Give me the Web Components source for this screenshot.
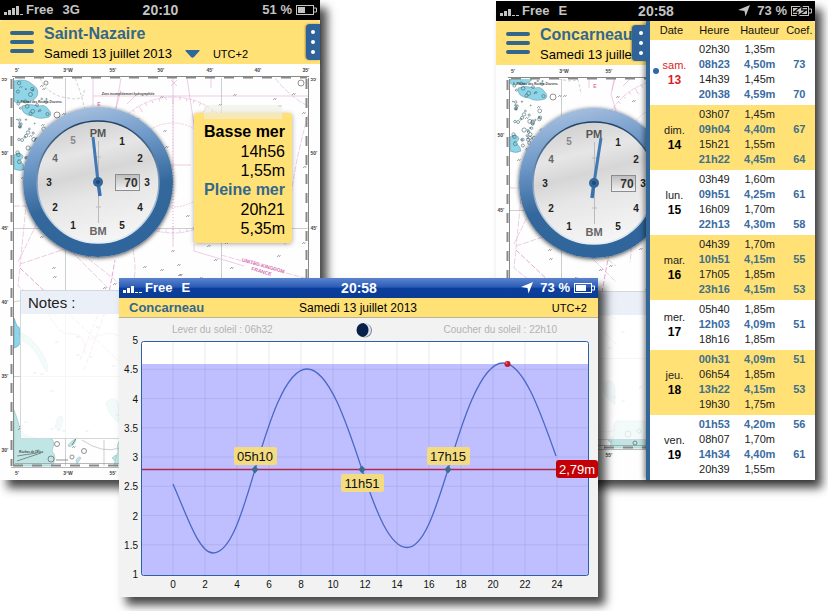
<!DOCTYPE html>
<html lang="fr">
<head>
<meta charset="utf-8">
<title>Marées</title>
<style>
  :root { --sun: #ffe176; --blue: #336699; --title: #33678c; }
  body { margin: 0; background: #fff; font-family: "Liberation Sans", Arial, sans-serif; color: #000; }
</style>
</head>
<body>
<tide-desktop>
  <app-window slot="first">
    <status-bar carrier="Free" network="3G" time="20:10" battery="51 %" level="50"></status-bar>
    <port-header port="Saint-Nazaire" date="Samedi 13 juillet 2013" zone="UTC+2" menu></port-header>
    <port-view needle="93,137 100,196" note></port-view>
  </app-window>
  <app-window slot="second">
    <status-bar carrier="Free" network="E" time="20:58" battery="73 %" gps charging level="100"></status-bar>
    <drawer-layout>
      <port-header slot="main" port="Concarneau" date="Samedi 13 juillet 2013"></port-header>
      <port-view slot="main" needle="105,137 96,197" shift="-19"></port-view>
      <tide-table slot="drawer"></tide-table>
    </drawer-layout>
  </app-window>
  <app-window slot="third">
    <status-bar tone="blue" carrier="Free" network="E" time="20:58" battery="73 %" gps level="73"></status-bar>
    <chart-header port="Concarneau" date="Samedi 13 juillet 2013" zone="UTC+2"></chart-header>
    <tide-chart></tide-chart>
  </app-window>
</tide-desktop>

<script>
function define(name, render) {
  customElements.define(name, class extends HTMLElement {
    constructor() { super(); this.attachShadow({ mode: 'open' }); }
    connectedCallback() { this.shadowRoot.innerHTML = render(this); }
  });
}
const attr = (el, n) => el.getAttribute(n) || '';

/* Overlapping windows share the cells of one proportional grid. */
define('tide-desktop', () => `
<style>
  :host { display: grid; min-height: 100vh; overflow: hidden;
    grid-template-columns: minmax(0,119fr) minmax(0,201fr) minmax(0,176fr) minmax(0,102fr) minmax(0,217fr) minmax(0,13fr);
    grid-template-rows: 278fr 202fr 117fr 14fr; }
  ::slotted([slot=first]) { grid-area: 1 / 1 / 3 / 3; }
  ::slotted([slot=second]) { grid-area: 1 / 4 / 3 / 6; margin-top: 1px; }
  ::slotted([slot=third]) { grid-area: 2 / 2 / 4 / 5; }
</style>
<slot name="first"></slot><slot name="second"></slot><slot name="third"></slot>`);

define('app-window', () => `
<style>
  :host { display: flex; flex-direction: column; min-height: 0; position: relative; background: #fff;
    box-shadow: 7px 8px 9px rgba(0,0,0,.72); }
</style><slot></slot>`);

define('status-bar', el => {
  const blue = attr(el, 'tone') === 'blue';
  const full = attr(el, 'network') === '3G';
  return `
<style>
  :host { display: grid; grid-template-columns: 1fr auto 1fr; align-items: center; height: 20px; padding: 0 3px 0 4px;
    box-sizing: border-box; font-size: 13px; line-height: 20px; font-weight: bold; white-space: nowrap;
    color: ${blue ? '#fff' : '#c4c4c4'}; background: ${blue ? 'linear-gradient(#5b84cf, #2b5cb5 45%, #0b3f9e 52%, #0c3c93)' : '#000'}; }
  div { display: flex; align-items: center; gap: 3px; }
  .net { margin-left: 6px; }
  .right { justify-content: flex-end; gap: 4px; }
  time { font-size: 14px; }
  svg { display: block; }
  .gps { margin-right: 3px; }
</style>
<div><svg width="19" height="10" fill="currentColor" aria-hidden="true"><path d="M0 7h3v3H0zM4 5h3v5H4zM8 3h3v7H8z"/><path d="${full ? 'M12 1h3v9h-3zM16 9h3v1h-3z' : 'M12 9h3v1h-3zM16 9h3v1h-3z'}"/></svg>
  <span>${attr(el, 'carrier')}</span><span class="net">${attr(el, 'network')}</span></div>
<time>${attr(el, 'time')}</time>
<div class="right">
  ${el.hasAttribute('gps') ? '<svg class="gps" width="12" height="12" fill="currentColor" aria-hidden="true"><path d="M12 0L7.500 11.500 6.500 6 0 5z"/></svg>' : ''}
  <span>${attr(el, 'battery')}</span>
  <svg width="21" height="11" aria-hidden="true"><rect x=".5" y=".5" width="17" height="9" fill="none" stroke="currentColor"/><path d="M18 3h2.500v4H18" fill="none" stroke="currentColor"/><rect x="2" y="2" width="${Math.round(attr(el, 'level') * .14)}" height="6" fill="currentColor"/>
  ${el.hasAttribute('charging') ? '<path d="M10.500 1L4.500 5.500H8L7 9l6.500-4.500H10z" fill="currentColor" stroke="#000" stroke-width="2.400" paint-order="stroke"/>' : ''}</svg>
</div>`;
});

define('drawer-handle', () => `
<style>
  :host { display: block; width: 14px; height: 36px; }
  button { display: block; width: 100%; height: 100%; padding: 0; border: 0; border-radius: 4px 0 0 4px; background: #2f639a;
    box-shadow: -1px 0 2px rgba(0,0,0,.35); }
  svg { display: block; margin: 0 auto; }
</style>
<button aria-label="Horaires"><svg width="8" height="36" fill="#fff"><circle cx="4" cy="8" r="2"/><circle cx="4" cy="18" r="2"/><circle cx="4" cy="28" r="2"/></svg></button>`);

define('port-header', el => `
<style>
  :host { display: flex; height: 44px; box-sizing: border-box; padding: 4px 0 0 10px; gap: 10px; background: var(--sun);
    border-radius: 3px 3px 0 0; box-shadow: 0 1px 2px rgba(0,0,0,.4); position: relative; white-space: nowrap; overflow: clip; overflow-clip-margin: 3px; }
  button { border: 0; padding: 0; background: none; display: flex; align-items: center; flex: none; }
  .menu { height: 36px; }
  h1 { margin: 0; font-size: 16px; line-height: 20px; color: var(--title); }
  .row { display: flex; align-items: center; font-size: 13px; line-height: 20px; gap: 13px; }
  small { font-size: 11px; }
  drawer-handle { margin-left: auto; }
</style>
<button class="menu" aria-label="Menu"><svg width="24" height="24" stroke="#33668c" stroke-width="4" stroke-linecap="round"><path d="M2 3h20M2 12h20M2 21h20"/></svg></button>
<div><h1>${attr(el, 'port')}</h1>
<div class="row"><span>${attr(el, 'date')}</span>${attr(el, 'zone') ? `<button aria-label="Choisir la date"><svg width="15" height="8" fill="#2f679d"><path d="M1 0h13q1 0 .5 1L9 7q-1.500 1.500-3 0L.5 1Q0 0 1 0z"/></svg></button><small>${attr(el, 'zone')}</small>` : ''}</div></div>
${el.hasAttribute('menu') ? '<drawer-handle></drawer-handle>' : ''}`);

/* Nautical chart. The sea content scrolls by "shift" under a fixed top border. */
define('sea-map', el => {
  const dy = +attr(el, 'shift') || 0;
  let seed = 7;
  const rnd = () => (seed = (seed * 16807) % 2147483647) / 2147483647;
  const top = 78;
  let marks = '', islets = '', ticks = '';
  for (let i = 0; i < 150; i++) {
    const x = (18 + rnd() * 286).toFixed(0), y = (86 + rnd() * 374).toFixed(0);
    marks += `M${x} ${y}l2 -2m0 2l1.500 -2`;
  }
  for (let i = 0; i < 75; i++) {
    const x = (17 + rnd() * 38 * (.4 + rnd() * .6)).toFixed(1), y = (83 + rnd() * 92).toFixed(1);
    islets += `<circle cx="${x}" cy="${y}" r="${(.5 + rnd() * 1.600).toFixed(1)}"/>`;
  }
  for (let a = 0; a < 360; a += 6) ticks += `<path transform="rotate(${a} 173 165)" d="M173 97v${a % 30 ? 3 : 7}"/>`;
  const xs = [[17, '5’'], [68, '3°W'], [113, '55’'], [161, '50’'], [210, '45’'], [258, '40’'], [306, '35’']];
  const ys = [[79, '55’'], [153, '50’'], [228, '45’'], [302, '40’'], [376, '35’'], [450, '30’']];
  return `
<style>
  :host { display: block; overflow: hidden; }
  svg { display: block; width: 100%; height: 100%; min-width: 320px; }
  text { font: bold 5px "Liberation Sans", Arial, sans-serif; text-anchor: middle; fill: #444; }
  .tiny { font-size: 3px; font-style: italic; }
  .pink { fill: #d873b4; }
</style>
<svg viewBox="0 64 320 416" preserveAspectRatio="xMinYMin slice" aria-hidden="true">
<defs><clipPath id="sea"><rect x="0" y="${top}" width="320" height="420"/></clipPath></defs>
<rect y="64" width="320" height="416" fill="#fefefe"/>
<g clip-path="url(#sea)"><g transform="translate(0 ${dy})">
  <g fill="#8fd5e8" stroke="#5b93a5" stroke-width=".5">
    <path d="M14 81q12-3 18 3 8 5 5 12-4 7-12 5-8 4-11 0z"/><path d="M22 106q8-3 17 0 6-2 9 3 5 5 1 8-10 3-16-1-12-1-11-10z"/>
    <path d="M14 155q6-4 9 1-1 5-5 4 6 3 7 9-5 3-11 0z"/><path d="M14 318l3 8q4 1 3 8 3 12-6 14z"/>
  </g>
  <g fill="#bfe6e4" stroke="#8bbdbd" stroke-width=".5">
    <path d="M14 410q5 12 6 20 8 10 24 8 14-2 8 13 6 6 0 15H14z"/><path d="M20 332q12 5 20 18 10 14 7 22-4-5-8-14-6-13-19-18z"/>
    <path d="M55 428q2-14 7-12 2 8-3 14zM68 445q5-5 8-7 0 7-7 9zM76 460q3-5 5-2l-4 6zM106 402q10-8 13 3v18q-12-9-13-21zM112 458q6-6 8 0v8z"/>
    <path d="M120 439h30v27h-36q1-8 4-14-2-7 2-13z"/>
  </g>
  <g fill="none" stroke="#b6babf" stroke-width=".7"><path d="M65.500 78v388M221.500 78v388M13 228.500h295M13 376.500h295M14 302q22-8 34 10 9 24 25 22 13-1 12 20M90 340q20-12 30-3M82 440q20 14 38 8M104 440v26"/>
    <path d="M40 78q8 18 28 20 18 4 16-10M75 78q8 20 10 34" stroke-dasharray="3 2"/></g>
  <path d="${marks}" fill="none" stroke="#707070" stroke-width=".6"/>
  <g fill="none" stroke="#3f6670" stroke-width=".6">${islets}</g>
  <g fill="none" stroke="#494949" stroke-width=".6"><circle cx="46" cy="83" r="2"/><circle cx="57" cy="115" r="3"/><circle cx="301" cy="83" r="3"/><circle cx="57" cy="444" r="2.500"/><circle cx="84" cy="451" r="2.500"/><circle cx="51" cy="459" r="3"/><circle cx="72" cy="457" r="2"/><circle cx="132" cy="452" r="3"/><circle cx="139" cy="461" r="2"/><circle cx="143" cy="449" r="2"/><path d="M56 460h12M17 461l24-8M17 456l20-3M72 445l5-8"/></g>
  <g fill="none" stroke="#e2acd3" stroke-width=".6">
    <path d="M93 78v18h215M93 96v10M121 78l-5 30M187 78l9 60M211 78v10M173 78v92M125 165h66M173 233v14M194 244v7l50 15"/><path d="M173 100v140" stroke-dasharray="1 2" stroke-width="2" stroke="#eed3e7"/>
    <circle cx="173" cy="165" r="68" stroke-dasharray="4 1"/><circle cx="173" cy="165" r="42" stroke-dasharray="2 1"/>${ticks}
    <path d="M18 262l22-45q20-10 60 0M14 206h12l-8 80 40 32M20 264l90-30M40 220l80 80M65 240l55 44M131 242q6 20 3 38M275 78q14 18 33 28M221 255l87 24M308 115q-14 50-18 90l-5 40" stroke-dasharray="6 1.500"/>
    <path d="M20 268l36 34 64 60M84 370l22-60 9-50M80 360l22-56" stroke-width="1" stroke-dasharray="5 2"/>
    <path d="M121 90l-6 22 7 24M127 104l10-10M171 80l6 6m-6 0l6-6"/>
  </g>
  ${dy ? '' : `<text class="tiny" x="128" y="95">Zone incomplètement hydrographiée</text>
  <g transform="rotate(16 265 270)"><text class="pink" x="262" y="268">UNITED KINGDOM</text><text class="pink" x="262" y="274">FRANCE</text></g>
  <text class="tiny" x="31" y="453">Roches de l'Élou</text>`}
  <text class="tiny" x="41" y="103">Plateau des Roches Douvres</text>
  <text class="pink" x="99" y="106">E</text>
  <g stroke="#888" fill="none"><path d="M13.500 60v406M308.500 60v406"/><path d="M11.500 60v406M306.500 60v406M13 465.500h295" stroke-width="2" stroke-dasharray="10 9"/><path d="M11 467.500h299M15 463.500h292" stroke-width=".6"/></g>
  ${ys.filter(p => p[0] + dy > 78).map(([y, t], i) => `${dy && i > 1 ? '' : `<text x="5" y="${y + 2}">${t}</text>`}${dy || i > 2 ? '' : `<text x="314" y="${y + 2}">${t}</text>`}`).join('')}
  ${xs.slice(dy ? 2 : 0, 3).map(([x, t]) => `<text x="${x}" y="475">${t}</text>`).join('')}
</g></g>
<g stroke="#888" fill="none"><path d="M12 76.500h297"/><path d="M15 77.500h292" stroke-width="2" stroke-dasharray="10 9"/></g>
${xs.slice(0, dy ? 3 : 7).map(([x, t]) => `<text x="${x}" y="72">${t}</text>`).join('')}
</svg>`;
});

define('tide-clock', el => {
  const [tip, tail] = attr(el, 'needle').split(' ');
  const nums = [[122, 141, 1], [140, 158, 2], [147, 182, 3], [140, 207, 4], [122, 225, 5], [73, 225, 1], [55, 207, 2], [49, 182, 3], [55, 158, 4, '#666'], [73, 140, 5, '#888']];
  return `
<style>
  :host { display: block; flex: none; width: 150px; height: 150px; border-radius: 50%; box-shadow: 0 1px 4px rgba(0,0,0,.75); }
  svg { display: block; width: 100%; height: 100%; }
  text { font: bold 10px "Liberation Sans", Arial, sans-serif; text-anchor: middle; fill: #222; }
</style>
<svg viewBox="23 107 150 150" role="img" aria-label="Horloge des marées">
<defs>
 <linearGradient id="ring" x1=".3" y1="0" x2=".55" y2="1"><stop offset="0" stop-color="#a9c1e0"/><stop offset=".3" stop-color="#6f99c8"/><stop offset=".62" stop-color="#34689c"/><stop offset="1" stop-color="#2f659b"/></linearGradient>
 <linearGradient id="lip" x1="0" y1="0" x2="0" y2="1"><stop offset="0" stop-color="#1f3f63"/><stop offset=".5" stop-color="#7e9cba"/><stop offset="1" stop-color="#e8f0f8"/></linearGradient>
 <linearGradient id="face" x1=".35" y1="0" x2=".6" y2="1"><stop offset="0" stop-color="#cfcfcf"/><stop offset=".25" stop-color="#e6e6e6"/><stop offset=".42" stop-color="#d6d6d6"/><stop offset=".6" stop-color="#e6e6e6"/><stop offset="1" stop-color="#f6f6f6"/></linearGradient>
 <linearGradient id="box" x1="0" y1="0" x2="0" y2="1"><stop offset="0" stop-color="#bdbdbd"/><stop offset="1" stop-color="#f3f3f3"/></linearGradient>
</defs>
<circle cx="98" cy="182" r="75" fill="url(#ring)"/><circle cx="98" cy="182" r="61" fill="url(#face)" stroke="url(#lip)" stroke-width="1.500"/>
<path d="M98.500 141v82M96 157h5M96 207h5" stroke="#bbb"/>
<text x="98" y="137" style="font-size:11px;fill:#555">PM</text><text x="98" y="235" style="font-size:11px;fill:#666">BM</text>
${nums.map(([x, y, n, c]) => `<text x="${x}" y="${y + 4}"${c ? ` style="fill:${c}"` : ''}>${n}</text>`).join('')}
<rect x="115.500" y="174.500" width="24" height="16" fill="url(#box)" stroke="#8d8d8d"/><text x="131" y="187" style="font-size:12px;fill:#333">70</text>
<path d="M${tip} L98,182" stroke="#4179b4" stroke-width="3"/><path d="M98,182 L${tail}" stroke="#3a71ab" stroke-width="3.500"/>
<circle cx="98" cy="182" r="5" fill="#336699"/><circle cx="98" cy="182" r="2" fill="#1d4a7a"/>
</svg>`;
});

define('port-view', el => `
<style>
  :host { display: block; position: relative; flex: 1; min-height: 0; overflow: hidden; }
  sea-map { position: absolute; inset: 0; }
  .content { position: relative; padding: 43px 20px 0; }
  .row { display: flex; gap: 21px; padding-left: 3px; align-items: flex-start; }
  .note { position: relative; margin-top: 6px; width: 98px; box-sizing: border-box; padding: 9px 7px 5px 0; background: var(--sun); border-radius: 3px;
    box-shadow: 0 1px 5px rgba(0,0,0,.35); text-align: right; font-size: 16px; line-height: 19px; white-space: nowrap; }
  .note::before { content: ""; position: absolute; left: 10px; right: 10px; top: -8px; height: 14px; background: rgba(240,238,225,.6); }
  h2 { margin: 0; font-size: 16px; line-height: 20px; }
  p { margin: 0; }
  .high { color: var(--title); }
  .notes { margin-top: 33px; min-width: 280px; height: 149px; box-sizing: border-box; display: flex; flex-direction: column; border: 1px solid #d3d8dc; background: rgba(255,255,255,.8); }
  label { display: block; height: 23px; line-height: 23px; padding-left: 7px; font-size: 15px; color: #222; background: rgba(232,236,247,.85); }
  textarea { flex: 1; border: 0; padding: 4px 8px; background: none; resize: none; font: inherit; }
</style>
<sea-map shift="${attr(el, 'shift')}"></sea-map>
<div class="content">
  <div class="row"><tide-clock needle="${attr(el, 'needle')}"></tide-clock>
  ${el.hasAttribute('note') ? '<section class="note"><h2>Basse mer</h2><p>14h56</p><p>1,55m</p><h2 class="high">Pleine mer</h2><p>20h21</p><p>5,35m</p></section>' : ''}</div>
  <div class="notes"><label for="n">${el.hasAttribute('note') ? 'Notes :' : ''}</label><textarea id="n" aria-label="Notes"></textarea></div>
</div>`);

define('drawer-layout', () => `
<style>
  :host { display: flex; flex: 1; min-height: 0; }
  main { flex: 150 1 0; min-width: 0; display: flex; flex-direction: column; overflow: hidden; }
  aside { flex: 165 1 0; min-width: 0; position: relative; border-left: 4px solid #336799; border-radius: 0 3px 0 0; box-shadow: -2px 0 5px rgba(0,0,0,.45); background: #fff; }
  drawer-handle { position: absolute; right: 100%; top: 4px; width: 18px; }
</style>
<main><slot name="main"></slot></main>
<aside><slot name="drawer"></slot><drawer-handle></drawer-handle></aside>`);

define('tide-table', () => {
  /* [day, number, [hour, height, coefficient]...]; a coefficient marks a high tide. */
  const days = [
    ['sam.', 13, ['02h30', '1,35m'], ['08h23', '4,50m', 73], ['14h39', '1,45m'], ['20h38', '4,59m', 70]],
    ['dim.', 14, ['03h07', '1,45m'], ['09h04', '4,40m', 67], ['15h21', '1,55m'], ['21h22', '4,45m', 64]],
    ['lun.', 15, ['03h49', '1,60m'], ['09h51', '4,25m', 61], ['16h09', '1,70m'], ['22h13', '4,30m', 58]],
    ['mar.', 16, ['04h39', '1,70m'], ['10h51', '4,15m', 55], ['17h05', '1,85m'], ['23h16', '4,15m', 53]],
    ['mer.', 17, ['05h40', '1,85m'], ['12h03', '4,09m', 51], ['18h16', '1,85m']],
    ['jeu.', 18, ['00h31', '4,09m', 51], ['06h54', '1,85m'], ['13h22', '4,15m', 53], ['19h30', '1,75m']],
    ['ven.', 19, ['01h53', '4,20m', 56], ['08h07', '1,70m'], ['14h34', '4,40m', 61], ['20h39', '1,55m']]];
  return `
<style>
  :host { display: block; }
  table { width: 100%; border-collapse: collapse; table-layout: fixed; font-size: 11px; line-height: 15px; text-align: center; color: #222; white-space: nowrap; }
  th, td { padding: 0; font-weight: normal; }
  thead th { line-height: 19px; background: var(--sun); color: #111; }
  thead th:last-child { border-radius: 0 3px 0 0; }
  .d { width: 26%; } .h { width: 26%; } .t { width: 29%; }
  tbody tr:first-child td { padding-top: 2px; } tbody tr:last-child td { padding-bottom: 3px; }
  tbody:nth-of-type(even) { background: var(--sun); }
  tbody th { position: relative; vertical-align: middle; padding-left: 6px; }
  tbody th b { display: block; font-size: 12px; color: #000; }
  .today, .today b { color: #d81e28; }
  .today::before { content: ""; position: absolute; left: 3px; top: 28px; width: 6px; height: 6px; border-radius: 50%; background: #2f66a5; }
  .high td { font-weight: bold; color: #3a6ba3; }
  tbody:nth-of-type(even) .high td { color: #3f6f86; }
</style>
<table><thead><tr><th class="d" scope="col">Date</th><th class="h" scope="col">Heure</th><th class="t" scope="col">Hauteur</th><th scope="col">Coef.</th></tr></thead>
${days.map(([d, n, ...rows], k) => `<tbody>${rows.map((r, i) => `<tr${r[2] ? ' class="high"' : ''}>${i ? '' : `<th scope="rowgroup" rowspan="${rows.length}"${k ? '' : ' class="today"'}>${d}<b>${n}</b></th>`}<td>${r[0]}</td><td>${r[1]}</td><td>${r[2] || ''}</td></tr>`).join('')}</tbody>`).join('')}
</table>`;
});

define('chart-header', el => `
<style>
  :host { display: grid; grid-template-columns: 1fr auto 1fr; align-items: center; height: 20px; padding: 0 11px 0 10px; background: var(--sun);
    border-bottom: 1px solid #b7b39e; box-sizing: border-box; font-size: 12px; line-height: 20px; white-space: nowrap; }
  h1 { margin: 0; font-size: 13px; color: var(--title); }
  small { font-size: 11px; text-align: right; }
</style>
<h1>${attr(el, 'port')}</h1><span>${attr(el, 'date')}</span><small>${attr(el, 'zone')}</small>`);

define('tide-chart', () => {
  const X = h => 173 + h * 16, Y = m => 574 - (m - 1) * 58.5;
  let grid = '', labels = '';
  for (let h = 0; h <= 24; h += 2) { grid += `M${X(h)} 341V575`; labels += `<text x="${X(h)}" y="588" text-anchor="middle">${h}</text>`; }
  for (let m = 1; m <= 5; m += .5) { if (m > 1 && m < 5) grid += `M142 ${Y(m)}H589`; labels += `<text x="138" y="${Y(m) + 4}" text-anchor="end">${m}</text>`; }
  const tag = (x, y, t) => `<rect x="${x - 21}" y="${y - 9}" width="43" height="18" rx="2" fill="#f3db80"/><text class="tag" x="${x}" y="${y + 5}">${t}</text>`;
  const pin = x => `<path d="M${x} 465.500l3.500 4-3.500 4-3.500-4z" fill="#3d6a8e"/>`;
  return `
<style>
  :host { display: flex; flex-direction: column; flex: 1; min-height: 0; background: #f2f2f2; }
  .sun { display: grid; grid-template-columns: 1fr auto 1fr; align-items: center; height: 22px; padding: 2px 41px 0 53px; box-sizing: border-box;
    font-size: 10px; line-height: 20px; color: #b3b3b3; white-space: nowrap; }
  .sun span:last-child { text-align: right; }
  .plot { width: 100%; flex: 1; min-height: 0; display: block; overflow: visible; }
  text { font: 10px "Liberation Sans", Arial, sans-serif; fill: #111; }
  .tag { font-size: 13px; text-anchor: middle; }
</style>
<div class="sun"><span>Lever du soleil : 06h32</span>
<svg width="17" height="16" aria-label="Lune" role="img"><circle cx="9" cy="8.500" r="7" fill="#888"/><circle cx="8" cy="8" r="7" fill="#dce4f2"/><path d="M7.500 1a7 7 0 0 0 0 14q5-2 5-7t-5-7z" fill="#07214a"/></svg>
<span>Coucher du soleil : 22h10</span></div>
<svg class="plot" viewBox="119 340 479 257" preserveAspectRatio="xMidYMin meet" role="img" aria-label="Courbe de marée">
<rect x="141.500" y="341.500" width="447" height="234" rx="2" fill="#fff"/>
<rect x="142" y="364" width="447" height="211" fill="#bfbfff"/>
<path d="${grid}" stroke="#334466" stroke-opacity=".1" fill="none"/>
<rect x="141.500" y="341.500" width="447" height="234" rx="2" fill="none" stroke="#2d61a3"/>
<path d="M142 469.500H557" stroke="#b02a4c" stroke-width="1.500"/>
<path d="M173 484C187 516 199 553 213 553C231 553 243 510 255 469.500C268 426 285 369 307 369C329 369 347 424 362 469.500C376 512 390 547.500 407 547.500C424 547.500 436 508 448 469.500C461 426 480 363 503 363C524 363 541 414 556 456" fill="none" stroke="#4a68c4" stroke-width="1.300"/>
${pin(255)}${pin(362)}${pin(448)}
<circle cx="507.500" cy="364" r="3" fill="#c4182c"/><circle cx="506.500" cy="363" r="1" fill="#f0707a"/>
${tag(255, 456, '05h10')}${tag(362, 483, '11h51')}${tag(448, 456, '17h15')}
<rect x="556" y="460" width="42" height="18" rx="3" fill="#c30006"/><text class="tag" x="577" y="474" style="fill:#fff">2,79m</text>
${labels}
</svg>`;
});
</script>
</body>
</html>
